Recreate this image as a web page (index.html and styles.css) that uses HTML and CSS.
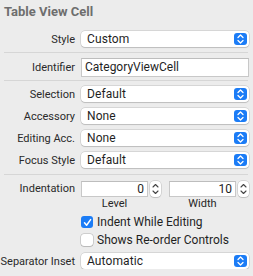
FILE: index.html
```html
<!DOCTYPE html>
<html lang="en">
<head>
  <meta charset="UTF-8">
  <title>Table View Cell</title>
  <link rel="stylesheet" href="styles.css">
</head>
<body>
  <div class="panel">
    <h3 class="title">Table View Cell</h3>

    <div class="row">
      <span class="label">Style</span>
      <div class="popup"><span>Custom</span><i class="arrows"></i></div>
    </div>

    <div class="sep"></div>

    <div class="row">
      <span class="label">Identifier</span>
      <div class="field">CategoryViewCell</div>
    </div>

    <div class="sep sep-tight"></div>

    <div class="rows">
      <div class="row">
        <span class="label">Selection</span>
        <div class="popup"><span>Default</span><i class="arrows"></i></div>
      </div>
      <div class="row">
        <span class="label">Accessory</span>
        <div class="popup"><span>None</span><i class="arrows"></i></div>
      </div>
      <div class="row">
        <span class="label">Editing Acc.</span>
        <div class="popup"><span>None</span><i class="arrows"></i></div>
      </div>
      <div class="row">
        <span class="label">Focus Style</span>
        <div class="popup"><span>Default</span><i class="arrows"></i></div>
      </div>
    </div>

    <div class="sep sep-wide"></div>

    <div class="row row-top">
      <span class="label label-top">Indentation</span>
      <div class="steppers">
        <div class="num-group">
          <div class="num"><div class="field field-num">0</div><i class="stepper"></i></div>
          <span class="caption">Level</span>
        </div>
        <div class="num-group">
          <div class="num"><div class="field field-num">10</div><i class="stepper"></i></div>
          <span class="caption">Width</span>
        </div>
      </div>
    </div>

    <div class="checks">
      <label class="check"><i class="box checked"></i>Indent While Editing</label>
      <label class="check"><i class="box"></i>Shows Re-order Controls</label>
    </div>

    <div class="row">
      <span class="label">Separator Inset</span>
      <div class="popup"><span>Automatic</span><i class="arrows"></i></div>
    </div>
  </div>
</body>
</html>
```

FILE: styles.css
```css
body {
  margin: 0;
  background-color: #ececec;
  font-family: Roboto, "Noto Sans", sans-serif;
  color: #262626;
}
.panel {
  padding: 0 4px 0 4px;
}
.title {
  margin: 0 0 11px 0;
  padding-top: 4px;
  font-size: 13px;
  line-height: 16px;
  font-weight: bold;
  color: #6e6e6e;
}
.row {
  display: grid;
  grid-template-columns: 71px 168px;
  column-gap: 6px;
  align-items: center;
}
.row-top {
  align-items: start;
}
.rows {
  display: flex;
  flex-direction: column;
  gap: 6px;
}
.label {
  justify-self: end;
  font-size: 11px;
  white-space: nowrap;
  color: #2a2a2a;
}
.label-top {
  line-height: 16px;
}
.popup {
  height: 16px;
  background: #fff;
  border-radius: 4px;
  box-shadow: 0 0 0 0.5px rgba(0,0,0,0.18), 0 1px 1px rgba(0,0,0,0.12);
  display: flex;
  align-items: center;
  justify-content: space-between;
  padding: 0 2px 0 6px;
  font-size: 12px;
  letter-spacing: 0.1px;
  color: #1f1f1f;
}
.arrows {
  width: 13px;
  height: 12px;
  border-radius: 3px;
  background: #1b7cf6 no-repeat center / 7px 10px;
  background-image: url("data:image/svg+xml,%3Csvg xmlns='http://www.w3.org/2000/svg' viewBox='0 0 7 10'%3E%3Cpath d='M1 3.5L3.5 1L6 3.5M1 6.5L3.5 9L6 6.5' fill='none' stroke='white' stroke-width='1.3' stroke-linecap='round' stroke-linejoin='round'/%3E%3C/svg%3E");
}
.sep {
  height: 1px;
  background: #d6d6d6;
  margin: 5px 1px 5px 0;
}
.sep-tight {
  margin-top: 3px;
}
.sep-wide {
  margin-top: 6px;
  margin-bottom: 6px;
}
.field {
  height: 19px;
  box-sizing: border-box;
  background: #fff;
  border: 1px solid #c8c8c8;
  border-top-color: #bdbdbd;
  padding: 0 3px;
  font-size: 12px;
  line-height: 17px;
  color: #1f1f1f;
}
.steppers {
  display: flex;
  gap: 8px;
}
.num-group {
  flex: 1;
  display: flex;
  flex-direction: column;
}
.num {
  display: flex;
  align-items: center;
  gap: 2px;
}
.field-num {
  flex: 1;
  height: 16px;
  line-height: 14px;
  text-align: right;
}
.stepper {
  width: 11px;
  height: 16px;
  box-sizing: border-box;
  background: #fff no-repeat center / 7px 12px;
  border-radius: 4px;
  box-shadow: 0 0 0 0.5px rgba(0,0,0,0.2), 0 1px 1px rgba(0,0,0,0.1);
  background-image: url("data:image/svg+xml,%3Csvg xmlns='http://www.w3.org/2000/svg' viewBox='0 0 7 12'%3E%3Cpath d='M1 4L3.5 1.5L6 4M1 8L3.5 10.5L6 8' fill='none' stroke='%23444' stroke-width='1.1' stroke-linecap='round' stroke-linejoin='round'/%3E%3C/svg%3E");
}
.caption {
  width: 67px;
  text-align: center;
  font-size: 11px;
  line-height: 12px;
  margin-top: 1px;
}
.checks {
  display: flex;
  flex-direction: column;
  gap: 6px;
  padding-left: 77px;
  margin: 6px 0 7px 0;
}
.check {
  display: flex;
  align-items: center;
  gap: 4px;
  height: 12px;
  font-size: 12px;
  color: #1f1f1f;
}
.box {
  width: 12px;
  height: 12px;
  box-sizing: border-box;
  border-radius: 3px;
  background: #fff;
  box-shadow: 0 0 0 0.5px rgba(0,0,0,0.25), 0 1px 1px rgba(0,0,0,0.1);
}
.box.checked {
  background: #1b7cf6 no-repeat center / 9px 9px;
  box-shadow: none;
  background-image: url("data:image/svg+xml,%3Csvg xmlns='http://www.w3.org/2000/svg' viewBox='0 0 9 9'%3E%3Cpath d='M1.5 4.8L3.6 7.2L7.6 1.6' fill='none' stroke='white' stroke-width='1.5' stroke-linecap='round' stroke-linejoin='round'/%3E%3C/svg%3E");
}
```
